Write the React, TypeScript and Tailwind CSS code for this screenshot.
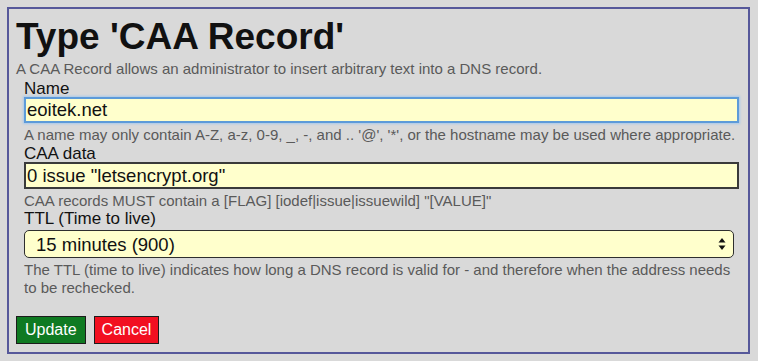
function Hint({ children }: { children: React.ReactNode }) {
  return <p className="text-[15px] leading-[17px] text-[#5a5a5a]">{children}</p>;
}

function Label({ children }: { children: React.ReactNode }) {
  return <label className="block text-[17px] leading-[17px] text-[#111]">{children}</label>;
}

function SelectArrows() {
  return (
    <svg width="8" height="13" viewBox="0 0 8 13" className="pointer-events-none absolute right-[8px] top-1/2 -translate-y-1/2">
      <path d="M4 0.5 L7.5 5 L0.5 5 Z" fill="#111" />
      <path d="M4 12.5 L7.5 8 L0.5 8 Z" fill="#111" />
    </svg>
  );
}

export default function App() {
  return (
    <div className="h-[361px] bg-[#d9d9d9] pt-[7px] pl-[7px] pr-[8px] font-['Liberation_Sans',Arial,sans-serif]">
      <form className="h-[347px] border-2 border-[#56589a] pl-[7px] pr-[9px] pt-[8px]">
        <h1 className="text-[37px] font-bold leading-[40px] text-[#111]">Type 'CAA Record'</h1>
        <p className="mt-[3px] text-[15px] leading-[17px] text-[#5a5a5a]">
          A CAA Record allows an administrator to insert arbitrary text into a DNS record.
        </p>

        <div className="pl-[8px]">
          <div className="mt-[3px]">
            <Label>Name</Label>
            <input
              defaultValue="eoitek.net"
              className="block h-[26px] w-full border-2 border-[#5d9bd9] bg-[#ffffcc] px-[1px] text-[18.5px] text-[#111] shadow-[0_0_2px_1px_#a7c9ec] outline-none"
            />
            <div className="mt-[3px]">
              <Hint>
                A name may only contain A-Z, a-z, 0-9, _, -, and .. '@', '*', or the hostname may be used where appropriate.
              </Hint>
            </div>
          </div>

          <div className="mt-[2px]">
            <Label>CAA data</Label>
            <input
              defaultValue={'0 issue "letsencrypt.org"'}
              className="block h-[27px] w-full border-2 border-[#3a3a3a] bg-[#ffffcc] px-[1px] text-[18.5px] text-[#111] outline-none"
            />
            <div className="mt-[3px]">
              <Hint>CAA records MUST contain a [FLAG] [iodef|issue|issuewild] "[VALUE]"</Hint>
            </div>
          </div>

          <div className="mt-[1px]">
            <Label>TTL (Time to live)</Label>
            <div className="relative mt-[3px] mr-[5px]">
              <select
                defaultValue="900"
                className="block h-[28px] w-full appearance-none rounded-[5px] border border-[#2e2e2e] bg-[#ffffcc] pl-[11px] text-[18.5px] text-[#111] outline-none"
              >
                <option value="900">15 minutes (900)</option>
                <option value="3600">1 hour (3600)</option>
              </select>
              <SelectArrows />
            </div>
            <div className="mt-[3px]">
              <p className="text-[15px] leading-[18px] text-[#5a5a5a]">
                The TTL (time to live) indicates how long a DNS record is valid for - and therefore when the address needs
                to be rechecked.
              </p>
            </div>
          </div>
        </div>

        <div className="mt-[19px] flex gap-[8px]">
          <button type="button" className="h-[28px] border border-[#1c1c1c] bg-[#0f7a22] px-[8px] text-[16px] text-white">
            Update
          </button>
          <button type="button" className="h-[28px] border border-[#1c1c1c] bg-[#f20f20] px-[7px] text-[16px] text-white">
            Cancel
          </button>
        </div>
      </form>
    </div>
  );
}
